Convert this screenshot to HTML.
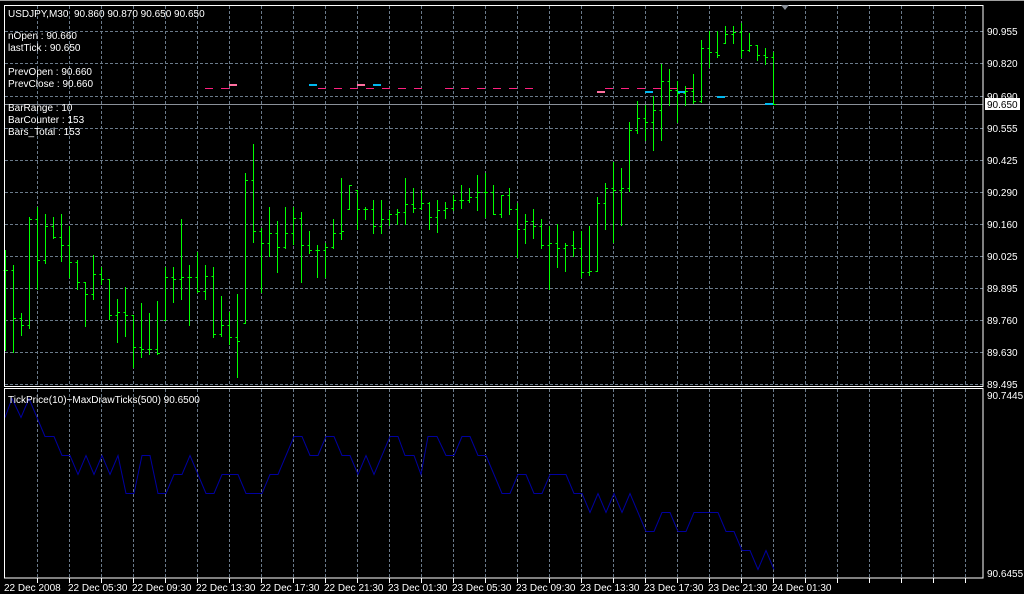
<!DOCTYPE html>
<html><head><meta charset="utf-8">
<style>
html,body{margin:0;padding:0;background:#000;width:1024px;height:594px;overflow:hidden}
svg{display:block}
text{font-family:"Liberation Sans",sans-serif;font-size:10px;fill:#fff}
</style></head><body>
<svg id="s" width="1024" height="594" xmlns="http://www.w3.org/2000/svg">
<rect width="1024" height="594" fill="#000"/>
<line x1="0" y1="0.5" x2="1024" y2="0.5" stroke="#a0a0a0"/>
<g id="grid" stroke="#6a7a8a" stroke-dasharray="3,2" stroke-width="1"></g>
<line x1="5" y1="104.5" x2="983" y2="104.5" stroke="#8a9099"/>
<g id="marks"></g>
<g id="bars" stroke="#00ff00" stroke-width="1"></g>
<polyline id="tick" fill="none" stroke="#0000a0" stroke-width="1"/>
<rect x="4.5" y="5.5" width="978.5" height="381" fill="none" stroke="#fff"/>
<rect x="4.5" y="388.5" width="978.5" height="189.5" fill="none" stroke="#fff"/>
<polygon points="781,5 789,5 785,10" fill="#8a9099"/>
<text x="8" y="17" xml:space="preserve" style="white-space:pre">USDJPY,M30  90.860 90.870 90.650 90.650</text>
<text x="8" y="39">nOpen : 90.660</text>
<text x="8" y="51">lastTick : 90.650</text>
<text x="8" y="75">PrevOpen : 90.660</text>
<text x="8" y="87">PrevClose : 90.660</text>
<text x="8" y="111">BarRange : 10</text>
<text x="8" y="123">BarCounter : 153</text>
<text x="8" y="135">Bars_Total : 153</text>
<text x="8" y="403">TickPrice(10)~MaxDrawTicks(500) 90.6500</text>
<g id="axis"></g>
<rect x="985" y="98" width="35" height="12" fill="#fff"/>
<text x="987" y="108" style="fill:#000">90.650</text>
<text x="987" y="399">90.7445</text>
<text x="987" y="577">90.6455</text>
</svg>
<script>
var NS="http://www.w3.org/2000/svg";
function el(p,t,a,txt){var e=document.createElementNS(NS,t);for(var k in a)e.setAttribute(k,a[k]);if(txt)e.textContent=txt;p.appendChild(e);return e;}
var g=document.getElementById('grid');
for(var x=37;x<=965;x+=32){el(g,'line',{x1:x+.5,y1:6,x2:x+.5,y2:386});el(g,'line',{x1:x+.5,y1:389,x2:x+.5,y2:578});}
var hy=[31,63,96,128,160,192,224,256,288,320,352,384];
var hl=['90.955','90.820','90.690','90.555','90.425','90.290','90.160','90.025','89.895','89.760','89.630','89.495'];
var ax=document.getElementById('axis');
hy.forEach(function(y,i){el(g,'line',{x1:5,y1:y+.5,x2:983,y2:y+.5});el(ax,'text',{x:987,y:y+4},hl[i]);});
for(var x=37;x<=965;x+=32){el(ax,'line',{x1:x+.5,y1:578,x2:x+.5,y2:583,stroke:'#fff'});}
var tl=['22 Dec 2008','22 Dec 05:30','22 Dec 09:30','22 Dec 13:30','22 Dec 17:30','22 Dec 21:30','23 Dec 01:30','23 Dec 05:30','23 Dec 09:30','23 Dec 13:30','23 Dec 17:30','23 Dec 21:30','24 Dec 01:30'];
tl.forEach(function(t,i){el(ax,'text',{x:i==0?4:68+64*(i-1),y:591},t);});
var B=[[250,350,270],[265,352,318],[313,335,325],[217,328,219],[207,289,260],[214,263,226],[217,238,237],[214,261,245],[226,277,262],[260,289,282],[282,326,294],[255,299,274],[267,284,279],[279,319,315],[299,342,312],[287,336,315],[315,367,347],[303,357,349],[313,354,349],[301,354,353],[267,320,277],[267,302,279],[219,299,277],[265,325,277],[252,292,291],[265,299,276],[267,337,334],[296,336,325],[312,344,337],[294,377,341],[173,323,180],[144,242,231],[228,292,243],[207,256,233],[221,272,247],[207,248,233],[207,244,218],[212,282,245],[231,253,250],[245,277,250],[243,277,247],[219,248,233],[178,239,231],[185,209,185],[190,229,209],[207,219,209],[200,233,226],[200,233,219],[210,225,214],[209,224,212],[178,224,204],[188,212,208],[190,209,203],[202,229,217],[200,232,210],[202,218,208],[195,210,200],[185,208,200],[188,202,197],[175,210,192],[173,217,192],[185,214,214],[195,217,195],[188,214,209],[203,257,229],[214,243,221],[209,238,226],[219,248,245],[226,289,243],[224,267,248],[243,271,245],[231,256,248],[231,277,272],[226,275,271],[197,271,203],[183,229,188],[162,242,190],
[168,225,188],[122,191,130],[101,133,118],[105,140,122],[96,150,110],[64,140,81],[69,105,90],[81,122,93],[86,105,91],[74,103,101],[40,102,48],[31,67,52],[31,57,55],[26,43,34],[26,43,32],[23,57,50],[33,51,45],[45,60,55],[48,64,57],[52,104,104]];
var bg=document.getElementById('bars'),prev=270;
B.forEach(function(b,i){var x=5+8*i+.5;el(bg,'line',{x1:x,y1:b[0],x2:x,y2:b[1]+1});
var o=Math.min(Math.max(prev,b[0]),b[1]);el(bg,'line',{x1:x-2,y1:o+.5,x2:x,y2:o+.5});
el(bg,'line',{x1:x,y1:b[2]+.5,x2:x+2.5,y2:b[2]+.5});prev=b[2];});
var m=document.getElementById('marks');
function seg(x1,x2,y,c){for(var x=x1;x<x2;x+=16)el(m,'rect',{x:x,y:y,width:8,height:1,fill:c});}
seg(205,236,88,'#ff2080');seg(318,420,88,'#ff2080');seg(445,535,88,'#ff2080');seg(605,700,88,'#ff2080');
[[229,84,'#ff70a0'],[309,84,'#00b8f0'],[357,84,'#ff70a0'],[373,84,'#00b8f0'],[597,91,'#ff70a0'],[645,91,'#00b8f0'],[677,91,'#00b8f0'],[717,96,'#00b8f0'],[765,103,'#00b8f0']].forEach(function(r){el(m,'rect',{x:r[0],y:r[1],width:8,height:2,fill:r[2]});});
var P=[[5,417],[12,398],[21,417],[29,398],[37,417],[45,436],[54,436],[62,455],[70,455],[78,474],[86,455],[94,474],[102,455],[110,474],[118,455],[126,493],[134,493],[142,455],[150,455],[158,493],[166,493],[174,474],[182,474],[190,455],[198,474],[206,493],[214,493],[222,474],[238,474],[246,493],[262,493],[270,474],[278,474],[294,436],[302,436],[310,455],[318,455],[326,436],[334,436],[342,455],[350,455],[358,474],[366,455],[374,474],[390,436],[398,436],[405,455],[414,455],[421,474],[428,436],[437,436],[446,455],[454,455],[462,436],[470,436],[478,455],[486,455],[502,493],[510,493],[518,474],[526,474],[534,493],[542,493],[550,474],[566,474],[574,493],[582,493],[590,512],[598,493],[606,512],[614,493],[622,512],[630,493],[646,531],[654,531],[662,512],[670,512],[678,531],[686,531],[694,512],[718,512],[726,531],[734,531],[742,550],[750,550],[758,569],[766,550],[774,569]];
document.getElementById('tick').setAttribute('points',P.map(function(p){return p[0]+','+(p[1]+.5)}).join(' '));
</script>
</body></html>
